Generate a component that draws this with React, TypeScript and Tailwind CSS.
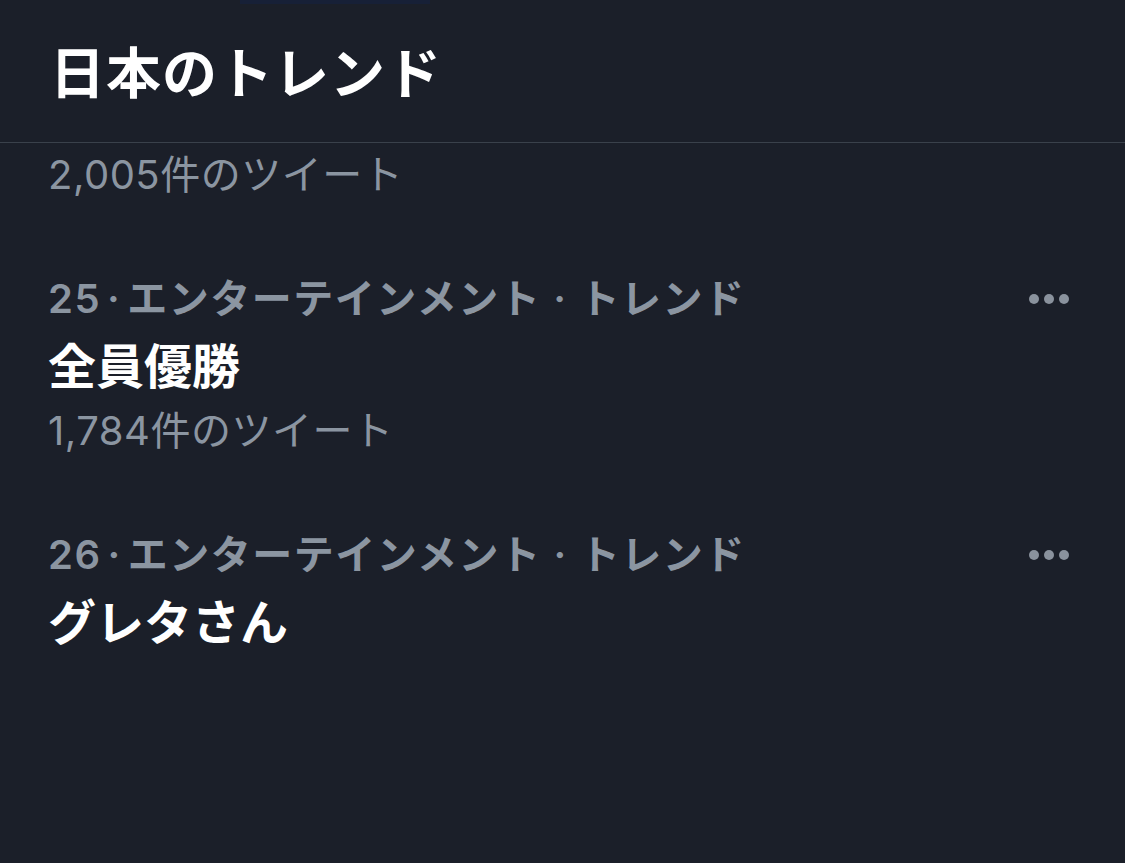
const trends = [
  { rank: 25, category: "エンターテインメント", name: "全員優勝", count: "1,784件のツイート" },
  { rank: 26, category: "エンターテインメント", name: "グレタさん", count: null },
];

const MoreDots = () => (
  <div className="flex items-center gap-[5px]">
    <span className="h-[10px] w-[10px] rounded-full bg-[#8a929d]" />
    <span className="h-[10px] w-[10px] rounded-full bg-[#8a929d]" />
    <span className="h-[10px] w-[10px] rounded-full bg-[#8a929d]" />
  </div>
);

export default function App() {
  return (
    <div
      className="flex min-h-[863px] w-full flex-col bg-[#1b1f29] text-white"
      style={{ fontFamily: 'Inter, "Noto Sans CJK JP", sans-serif' }}
    >
      <div className="h-[4px]">
        <div className="ml-[240px] h-full w-[190px] bg-[#172037]" />
      </div>
      <header className="flex h-[139px] items-center border-b border-[#3a414b] px-[50px]">
        <h1 className="text-[55px] font-bold tracking-[1px]">日本のトレンド</h1>
      </header>

      <div className="flex flex-col">
        <div className="px-[48px] pb-[30px] pt-[2px]">
          <p className="h-[60px] text-[40px] leading-[60px] tracking-[0.5px] text-[#8b95a1]">2,005件のツイート</p>
        </div>

        {trends.map((t) => (
          <div key={t.rank} className="flex flex-col px-[48px] py-[30px]">
            <div className="flex h-[68px] items-center justify-between pr-[8px]">
              <p className="text-[40px] font-semibold leading-[68px] tracking-[1.5px] text-[#8b95a1]">
                {t.rank}
                <span className="mx-[6px]">·</span>
                {t.category}
                <span className="mx-[12px]">·</span>
                トレンド
              </p>
              <MoreDots />
            </div>
            <p className="h-[68px] text-[48px] font-bold leading-[68px]">{t.name}</p>
            {t.count && (
              <p className="h-[60px] text-[40px] leading-[60px] tracking-[0.5px] text-[#8b95a1]">{t.count}</p>
            )}
          </div>
        ))}
      </div>
    </div>
  );
}
